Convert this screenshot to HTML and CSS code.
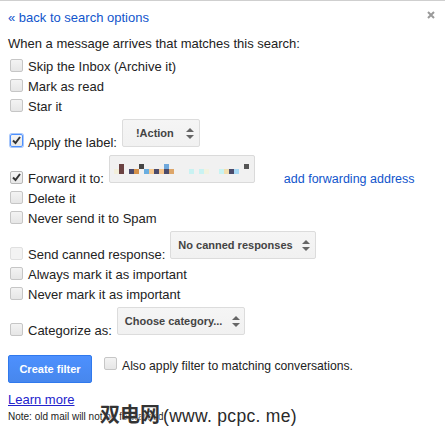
FILE: index.html
```html
<!DOCTYPE html>
<html>
<head>
<meta charset="utf-8">
<link rel="stylesheet" href="styles.css">
</head>
<body>
<div class="page">
  <div class="top">
    <a class="back">« back to search options</a>
    <svg class="close" width="8" height="8" viewBox="0 0 8 8"><path d="M1 1L7 7M7 1L1 7" stroke="#9a9a9a" stroke-width="2"/></svg>
  </div>
  <div class="heading">When a message arrives that matches this search:</div>

  <div class="row"><span class="cb"></span><span>Skip the Inbox (Archive it)</span></div>
  <div class="row"><span class="cb"></span><span>Mark as read</span></div>
  <div class="row"><span class="cb"></span><span>Star it</span></div>

  <div class="row tall">
    <div class="lab"><span class="cb checked focus"><svg width="11" height="11" viewBox="0 0 11 11"><path d="M2 5.5L4.5 8L9 2" fill="none" stroke="#333" stroke-width="2"/></svg></span><span>Apply the label:</span></div>
    <div class="select s-action"><span>!Action</span><svg width="8" height="13" viewBox="0 0 8 13"><path d="M0 5L4 1L8 5Z M0 8L4 12L8 8Z" fill="#666"/></svg></div>
  </div>

  <div class="row tall">
    <div class="lab"><span class="cb checked"><svg width="11" height="11" viewBox="0 0 11 11"><path d="M2 5.5L4.5 8L9 2" fill="none" stroke="#333" stroke-width="2"/></svg></span><span>Forward it to:</span></div>
    <div class="field">
      <svg width="144" height="26" viewBox="0 0 144 26">
        <rect x="9" y="8" width="5" height="10" fill="#6b4242"/>
        <rect x="4" y="13" width="5" height="5" fill="#f3efdb"/>
        <rect x="29" y="8" width="5" height="5" fill="#454545"/>
        <rect x="19" y="13" width="5" height="5" fill="#4a4a6c"/>
        <rect x="24" y="13" width="5" height="5" fill="#d4914a"/>
        <rect x="34" y="13" width="5" height="5" fill="#6aaee0"/>
        <rect x="39" y="13" width="5" height="5" fill="#f7c990"/>
        <rect x="44" y="13" width="5" height="5" fill="#4b4b6b"/>
        <rect x="49" y="13" width="5" height="5" fill="#f5c48c"/>
        <rect x="54" y="8" width="5" height="5" fill="#6fa8dc"/>
        <rect x="54" y="13" width="5" height="5" fill="#4b4b6b"/>
        <rect x="59" y="13" width="5" height="5" fill="#dda66a"/>
        <rect x="79" y="13" width="5" height="5" fill="#c9f2f2"/>
        <rect x="89" y="13" width="5" height="5" fill="#c9f2f2"/>
        <rect x="94" y="13" width="5" height="5" fill="#f2f2df"/>
        <rect x="109" y="13" width="5" height="5" fill="#c8f3f2"/>
        <rect x="114" y="13" width="5" height="5" fill="#f2dfb0"/>
        <rect x="119" y="13" width="5" height="5" fill="#4b4b6b"/>
        <rect x="124" y="13" width="5" height="5" fill="#a7d9f5"/>
        <rect x="134" y="8" width="5" height="5" fill="#555"/>
      </svg>
    </div>
    <a class="addfwd">add forwarding address</a>
  </div>

  <div class="row"><span class="cb"></span><span>Delete it</span></div>
  <div class="row"><span class="cb"></span><span>Never send it to Spam</span></div>

  <div class="row tall">
    <div class="lab"><span class="cb disabled"></span><span>Send canned response:</span></div>
    <div class="select s-canned"><span>No canned responses</span><svg width="8" height="13" viewBox="0 0 8 13"><path d="M0 5L4 1L8 5Z M0 8L4 12L8 8Z" fill="#666"/></svg></div>
  </div>

  <div class="row"><span class="cb"></span><span>Always mark it as important</span></div>
  <div class="row"><span class="cb"></span><span>Never mark it as important</span></div>

  <div class="row tall">
    <div class="lab"><span class="cb"></span><span>Categorize as:</span></div>
    <div class="select s-cat"><span>Choose category...</span><svg width="8" height="13" viewBox="0 0 8 13"><path d="M0 5L4 1L8 5Z M0 8L4 12L8 8Z" fill="#666"/></svg></div>
  </div>

  <div class="actions">
    <div class="btn">Create filter</div>
    <div class="also"><span class="cb"></span><span>Also apply filter to matching conversations.</span></div>
  </div>

  <a class="learn">Learn more</a>
  <div class="note">Note: old mail will not be forwarded</div>

  <div class="watermark"><span class="wm-cn">双电网</span><span class="wm-en">(www. pcpc. me)</span></div>
</div>
</body>
</html>
```

FILE: styles.css
```css
html, body {
  margin: 0;
  padding: 0;
  background: #fff;
}
body {
  border-top: 1px solid #cfcfcf;
  font-family: "Liberation Sans", Arial, sans-serif;
  font-size: 13px;
  color: #222;
}
.page {
  position: relative;
  padding: 7px 0 0 8px;
  height: 420px;
}
.top {
  display: flex;
  justify-content: space-between;
  align-items: center;
  height: 20px;
  line-height: 20px;
  padding-right: 10px;
}
.back {
  color: #15c;
}
.close {
  margin-top: -6px;
}
.heading {
  margin-top: 6px;
  line-height: 20px;
}
.row {
  display: flex;
  align-items: center;
  height: 20px;
  line-height: 20px;
  padding-left: 2px;
}
.heading + .row {
  margin-top: 3px;
}
.row.tall {
  height: 34px;
  align-items: flex-start;
  margin-top: 2px;
}
.lab {
  display: flex;
  align-items: center;
  padding-top: 14px;
  height: 20px;
  margin-right: 5px;
}
.cb {
  box-sizing: border-box;
  width: 13px;
  height: 13px;
  border: 1px solid #c6c6c6;
  border-radius: 2px;
  background: linear-gradient(#f3f3f3, #e6e6e6);
  margin-right: 5px;
  margin-bottom: 3px;
  flex: none;
  display: flex;
  align-items: center;
  justify-content: center;
}
.cb.checked {
  background: linear-gradient(#f5f5f5, #e8e8e8);
  border-color: #b8b8b8;
}
.cb.focus {
  border-color: #4d90fe;
  box-shadow: 0 0 0 1px #a9c8fb;
  margin-bottom: 6px;
}
.cb.disabled {
  background: #f3f3f3;
  border-color: #e0e0e0;
}
.select {
  box-sizing: border-box;
  height: 28px;
  display: flex;
  align-items: center;
  justify-content: space-between;
  background: linear-gradient(#f5f5f5, #f1f1f1);
  border: 1px solid #dcdcdc;
  border-radius: 2px;
  font-size: 11px;
  font-weight: bold;
  color: #444;
  padding: 0 5px 0 7px;
}
.s-action {
  width: 78px;
  padding-left: 13px;
}
.s-canned {
  width: 146px;
}
.s-cat {
  width: 128px;
  padding-right: 4px;
}
.field {
  box-sizing: border-box;
  width: 146px;
  height: 28px;
  background: #f1f1f1;
  border: 1px solid #dadada;
  border-radius: 2px;
}
.field svg {
  display: block;
}
.addfwd {
  color: #15c;
  font-size: 12.5px;
  margin-left: 29px;
  padding-top: 14px;
  line-height: 20px;
}
.actions {
  display: flex;
  align-items: flex-start;
  margin-top: 14px;
}
.btn {
  box-sizing: border-box;
  width: 84px;
  height: 28px;
  line-height: 26px;
  text-align: center;
  background: linear-gradient(#4d90fe, #4787ed);
  border: 1px solid #3079ed;
  border-radius: 2px;
  color: #fff;
  font-size: 11px;
  font-weight: bold;
}
.also {
  display: flex;
  align-items: center;
  height: 20px;
  margin-top: 1px;
  margin-left: 12px;
  font-size: 12.2px;
}
.also .cb {
  margin-bottom: 5px;
}
.learn {
  display: block;
  width: max-content;
  margin-top: 7px;
  line-height: 20px;
  color: #22c;
  text-decoration: underline;
}
.note {
  margin-top: 1px;
  font-size: 10px;
  line-height: 12px;
  color: #222;
}
.watermark {
  position: absolute;
  left: 100px;
  top: 400px;
  line-height: 26px;
  color: #2a2a2a;
  text-shadow: 0 0 2px #fff, 0 0 1px #fff;
  white-space: nowrap;
}
.wm-cn {
  font-family: "Noto Sans CJK SC", sans-serif;
  font-size: 20px;
  font-weight: bold;
  color: #333;
}
.wm-en {
  font-family: "Liberation Sans", sans-serif;
  font-size: 17.5px;
  letter-spacing: 0.3px;
  margin-left: 3px;
}
```
